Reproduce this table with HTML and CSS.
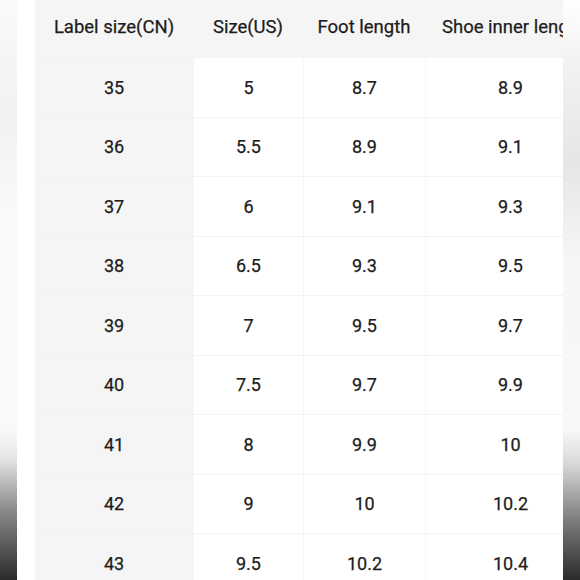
FILE: index.html
```html
<!DOCTYPE html>
<html>
<head>
<meta charset="utf-8">
<link rel="stylesheet" href="styles.css">
</head>
<body>
<div class="page">
  <div class="strip strip-left"></div>
  <div class="frame">
    <div class="chart">
      <div class="cell head first">Label size(CN)</div>
      <div class="cell head">Size(US)</div>
      <div class="cell head">Foot length</div>
      <div class="cell head last">Shoe inner length</div>

      <div class="cell first">35</div><div class="cell">5</div><div class="cell">8.7</div><div class="cell last">8.9</div>
      <div class="cell first">36</div><div class="cell">5.5</div><div class="cell">8.9</div><div class="cell last">9.1</div>
      <div class="cell first">37</div><div class="cell">6</div><div class="cell">9.1</div><div class="cell last">9.3</div>
      <div class="cell first">38</div><div class="cell">6.5</div><div class="cell">9.3</div><div class="cell last">9.5</div>
      <div class="cell first">39</div><div class="cell">7</div><div class="cell">9.5</div><div class="cell last">9.7</div>
      <div class="cell first">40</div><div class="cell">7.5</div><div class="cell">9.7</div><div class="cell last">9.9</div>
      <div class="cell first">41</div><div class="cell">8</div><div class="cell">9.9</div><div class="cell last">10</div>
      <div class="cell first">42</div><div class="cell">9</div><div class="cell">10</div><div class="cell last">10.2</div>
      <div class="cell first">43</div><div class="cell">9.5</div><div class="cell">10.2</div><div class="cell last">10.4</div>
    </div>
  </div>
  <div class="strip strip-right"></div>
</div>
</body>
</html>
```
FILE: styles.css
```css
html, body {
  margin: 0;
  padding: 0;
  background: #ffffff;
}
.page {
  width: 580px;
  height: 580px;
  display: flex;
  overflow: hidden;
  font-family: Roboto, "Liberation Sans", sans-serif;
  color: #1c1c1c;
}
.strip {
  width: 17px;
  flex: none;
  height: 580px;
}
.strip-left {
  background: linear-gradient(to bottom, #fbfbfb 0%, #f4f4f4 12%, #f2f2f2 22%, #f9f9f9 35%, #f9f9f9 74%, #e6e6e6 79%, #8a8a8a 88%, #2a2a2a 100%);
}
.strip-right {
  background: linear-gradient(to bottom, #ffffff 0%, #f3f3f3 10%, #e6e6e6 28%, #f6f6f6 45%, #f8f8f8 74%, #d8d8d8 80%, #7a7a7a 90%, #2a2a2a 100%);
}
.frame {
  margin-left: 18px;
  width: 528px;
  flex: none;
  overflow: hidden;
  background: #f5f5f5;
}
.chart {
  display: grid;
  grid-template-columns: 158px 110px 122px 170px;
  grid-template-rows: 57px repeat(9, 59.5px);
  width: 560px;
}
.cell {
  display: flex;
  align-items: center;
  justify-content: center;
  font-size: 18px;
  font-weight: 400;
  -webkit-text-stroke: 0.25px #1c1c1c;
  background: #ffffff;
  border-top: 1px solid #f3f3f3;
  border-left: 1px solid #f6f6f6;
  box-sizing: border-box;
  white-space: nowrap;
}
.cell.first {
  background: #f5f5f5;
  border-left: none;
  border-top: 1px solid #f2f2f2;
}
.cell.head {
  background: #f5f5f5;
  border: none;
  font-size: 18.5px;
  padding-bottom: 4px;
}
.cell.head.last {
  justify-content: flex-start;
  padding-left: 17px;
}
```
